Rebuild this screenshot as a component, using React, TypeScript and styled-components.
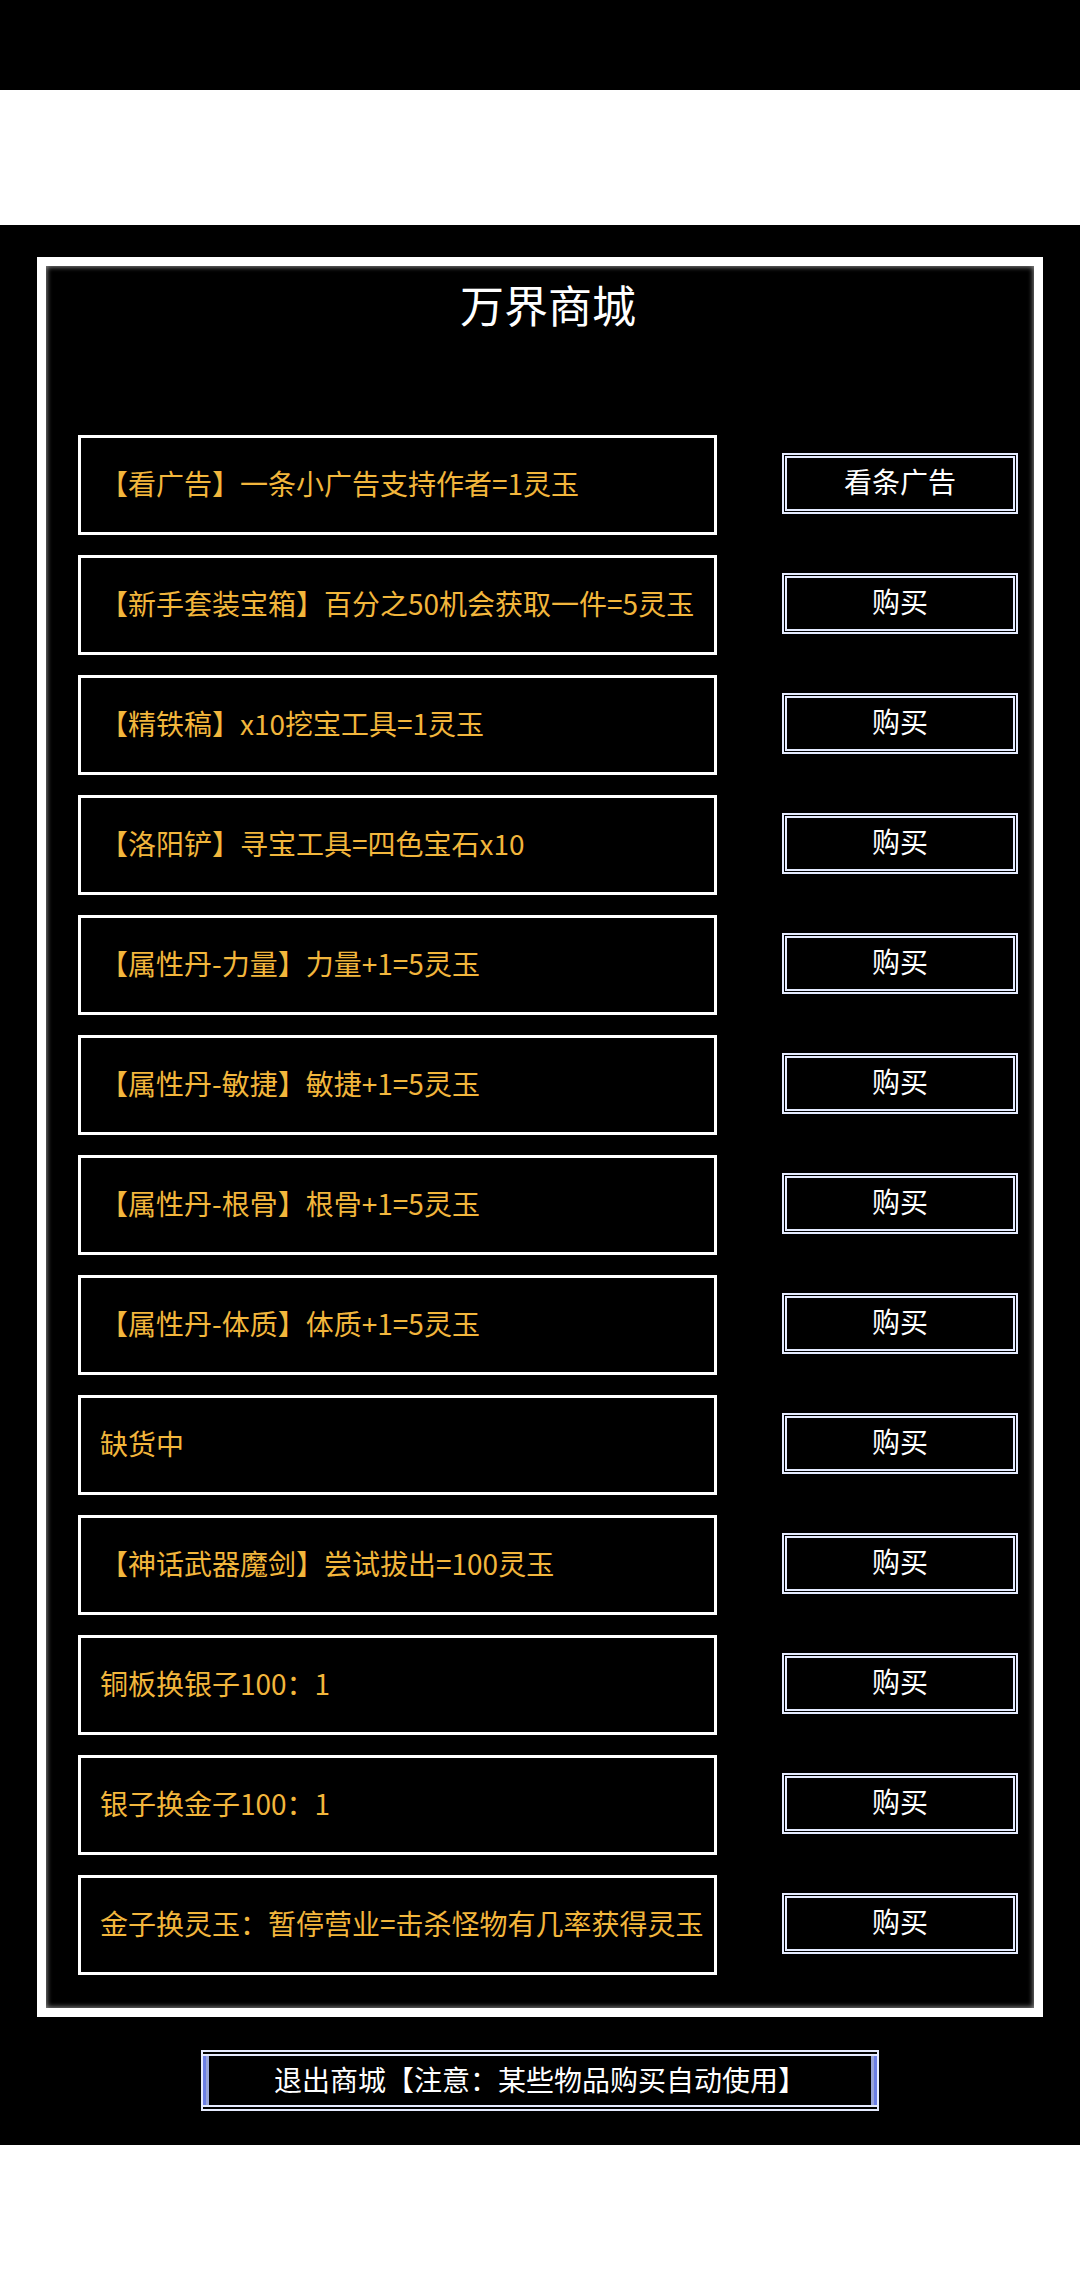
import styled, { createGlobalStyle } from "styled-components";

const GlobalStyle = createGlobalStyle`
  html, body {
    margin: 0;
    padding: 0;
    background: #ffffff;
  }
  body {
    font-family: "Noto Sans CJK SC", "Noto Sans", sans-serif;
  }
  * {
    box-sizing: border-box;
  }
`;

const StatusBar = styled.div`
  height: 90px;
  background: #000;
`;

const BannerSpace = styled.div`
  height: 135px;
  background: #fff;
`;

const Screen = styled.div`
  background: #000;
  padding: 32px 37px 34px;
  display: flex;
  flex-direction: column;
  align-items: center;
`;

const Frame = styled.div`
  width: 100%;
  border: 9px solid #ffffff;
  box-shadow: inset 0 0 5px 1px rgba(150, 150, 150, 0.9);
  background: #000;
  padding: 12px 16px 33px 32px;
  display: flex;
  flex-direction: column;
`;

const Title = styled.h1`
  margin: 0 0 104px;
  text-align: center;
  color: #fff;
  font-size: 44px;
  font-weight: 400;
  line-height: 53px;
`;

const List = styled.div`
  display: flex;
  flex-direction: column;
  gap: 20px;
`;

const Row = styled.div`
  display: flex;
  align-items: center;
  height: 100px;
`;

const ItemBox = styled.div`
  width: 639px;
  height: 100px;
  border: 3px solid #ffffff;
  padding: 0 0 5px 19px;
  display: flex;
  align-items: center;
  color: #f2b63c;
  font-size: 28px;
  white-space: nowrap;
  overflow: hidden;
`;

const BuyButton = styled.button`
  margin-left: 65px;
  margin-top: -3px;
  width: 236px;
  height: 61px;
  background: #000;
  border: 5px double #e4ebff;
  color: #fff;
  font-family: inherit;
  font-size: 28px;
  padding: 0 0 5px;
  display: flex;
  align-items: center;
  justify-content: center;
`;

const ExitButton = styled.button`
  margin-top: 33px;
  width: 678px;
  height: 61px;
  background: #000;
  border: 2px solid #e6ebff;
  box-shadow:
    inset 0 2px 0 #000,
    inset 0 -2px 0 #000,
    inset 0 4px 0 #e6ebff,
    inset 0 -4px 0 #e6ebff,
    inset 3px 0 0 #6c7fe6,
    inset -3px 0 0 #6c7fe6,
    inset 6px 0 0 #9aa6dc,
    inset -6px 0 0 #9aa6dc;
  color: #fff;
  font-family: inherit;
  font-size: 28px;
  padding: 0 0 3px;
  display: flex;
  align-items: center;
  justify-content: center;
`;

const items = [
  { text: "【看广告】一条小广告支持作者=1灵玉", action: "看条广告" },
  { text: "【新手套装宝箱】百分之50机会获取一件=5灵玉", action: "购买" },
  { text: "【精铁稿】x10挖宝工具=1灵玉", action: "购买" },
  { text: "【洛阳铲】寻宝工具=四色宝石x10", action: "购买" },
  { text: "【属性丹-力量】力量+1=5灵玉", action: "购买" },
  { text: "【属性丹-敏捷】敏捷+1=5灵玉", action: "购买" },
  { text: "【属性丹-根骨】根骨+1=5灵玉", action: "购买" },
  { text: "【属性丹-体质】体质+1=5灵玉", action: "购买" },
  { text: "缺货中", action: "购买" },
  { text: "【神话武器魔剑】尝试拔出=100灵玉", action: "购买" },
  { text: "铜板换银子100：1", action: "购买" },
  { text: "银子换金子100：1", action: "购买" },
  { text: "金子换灵玉：暂停营业=击杀怪物有几率获得灵玉", action: "购买" },
];

export default function App() {
  return (
    <>
      <GlobalStyle />
      <StatusBar />
      <BannerSpace />
      <Screen>
        <Frame>
          <Title>万界商城</Title>
          <List>
            {items.map((item, i) => (
              <Row key={i}>
                <ItemBox>{item.text}</ItemBox>
                <BuyButton>{item.action}</BuyButton>
              </Row>
            ))}
          </List>
        </Frame>
        <ExitButton>退出商城【注意：某些物品购买自动使用】</ExitButton>
      </Screen>
    </>
  );
}
